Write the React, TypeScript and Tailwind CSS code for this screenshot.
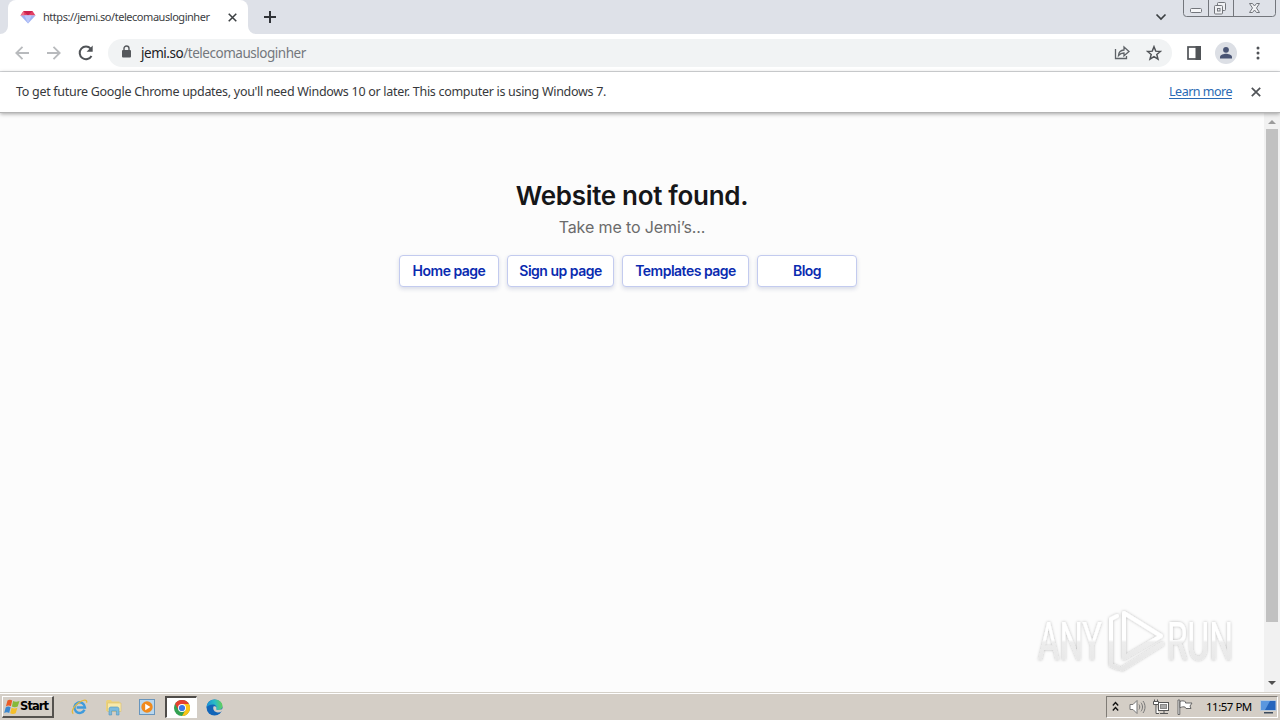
import type { ReactNode } from "react";

const TAHOMA = "font-['Noto_Sans','DejaVu_Sans',sans-serif]";

function Gem() {
  return (
    <svg className="shrink-0" width="16" height="14" viewBox="0 0 16 14">
      <path d="M3.5 1h9L15.5 5.500H.5z" fill="#e23f63" />
      <path d="M3.5 1 8 5.500l4.500-4.500z" fill="#c92350" />
      <path d="M.5 5.500h4L3.500 1z" fill="#f0708a" />
      <path d="M.5 5.500h15L8 13.500z" fill="#9fb2f3" />
      <path d="M4.500 5.500h7l-3.500 8z" fill="#bcc8fa" />
    </svg>
  );
}

function Cross({ size, color, width = 1.7 }: { size: number; color: string; width?: number }) {
  return (
    <svg width={size} height={size} viewBox="0 0 10 10" stroke={color} strokeWidth={width} fill="none">
      <path d="M.8.8l8.400 8.400M9.200.8L.8 9.200" />
    </svg>
  );
}

function TabStrip() {
  return (
    <div className="flex h-[34px] items-stretch bg-[#dee1e8]">
      <svg width="8" height="34" viewBox="0 0 8 34">
        <path d="M0 34a8 8 0 0 0 8-8v8z" fill="#fff" />
      </svg>
      <div className="flex w-[240px] items-center rounded-t-lg bg-white pl-3 pr-[11px]">
        <Gem />
        <span className={`ml-[7px] whitespace-nowrap text-[11px] tracking-[-0.46px] text-[#3c4043] ${TAHOMA}`}>
          https://jemi.so/telecomausloginher
        </span>
        <span className="ml-auto">
          <Cross size={9} color="#3c4043" />
        </span>
      </div>
      <svg width="8" height="34" viewBox="0 0 8 34">
        <path d="M8 34a8 8 0 0 1-8-8v8z" fill="#fff" />
      </svg>
      <svg className="ml-2 mt-[11px]" width="12" height="12" viewBox="0 0 12 12" stroke="#303338" strokeWidth="2">
        <path d="M6 0v12M0 6h12" />
      </svg>
      <svg className="ml-auto mt-[13px]" width="12" height="8" viewBox="0 0 12 8" fill="none" stroke="#3c4043" strokeWidth="1.700">
        <path d="M1.500 1.500 6 6l4.500-4.500" />
      </svg>
      <svg className="ml-4 mr-1" width="93" height="17" viewBox="0 0 93 17" fill="none" stroke="#73767c">
        <path d="M.5 0v13.500a3 3 0 0 0 3 3h86a3 3 0 0 0 3-3V0M25.500 0v16M50.500 0v16" />
        <rect x="7.500" y="8.500" width="11" height="4" rx="1" fill="#f5f6f8" />
        <g fill="#f0f1f4">
          <rect x="34.500" y="2.500" width="8" height="8" rx="1" />
          <rect x="31.500" y="5.500" width="8" height="8.500" rx="1" />
          <rect x="34.500" y="8.500" width="2.500" height="2.500" />
        </g>
        <path d="M66.500 3.500h3l2 2.500 2-2.500h3l-3 4.500 3 4.500h-3l-2-2.500-2 2.500h-3l3-4.500z" fill="#f0f1f4" />
      </svg>
    </div>
  );
}

function Arrow({ flip = false }: { flip?: boolean }) {
  return (
    <svg className={flip ? "rotate-180" : ""} width="14" height="14" viewBox="0 0 14 14" fill="none" stroke="#b8babd" strokeWidth="1.800">
      <path d="M14 7H1.500M7.500.8 1.300 7l6.200 6.200" />
    </svg>
  );
}

function Toolbar() {
  return (
    <div className="flex h-[38px] items-center border-b border-[#d8dadd] bg-white pl-[15px] pr-5">
      <Arrow />
      <span className="ml-[18px]">
        <Arrow flip />
      </span>
      <svg className="ml-[17px]" width="16" height="16" viewBox="0 0 16 16">
        <path d="M13.500 11A6.300 6.300 0 1 1 12.700 3.700" fill="none" stroke="#505357" strokeWidth="2" />
        <path d="M14.700.6v6.100H8.600z" fill="#505357" />
      </svg>
      <div className="ml-[14px] flex h-7 flex-1 items-center rounded-full bg-[#f1f3f4] pl-[14px] pr-[10px]">
        <svg className="mb-[2px]" width="9" height="13" viewBox="0 0 9 13">
          <rect x="0" y="5" width="9" height="7.500" rx="1" fill="#55585c" />
          <path d="M2 5.500V3.500a2.500 2.500 0 0 1 5 0v2" fill="none" stroke="#55585c" strokeWidth="1.400" />
        </svg>
        <span className={`ml-[10px] whitespace-nowrap pt-0.5 text-[13.5px] tracking-[-0.47px] text-[#74787d] ${TAHOMA}`}>
          <span className="text-[#202124]">jemi.so</span>/telecomausloginher
        </span>
        <svg className="ml-auto" width="16" height="15" viewBox="0 0 16 15" fill="none" stroke="#5f6368" strokeWidth="1.300">
          <path d="M1.500 4v9.500h11V11" />
          <path d="M4.500 10.500c.3-3.500 2.200-5.300 5.500-5.500V2l5 4.500-5 4.300V8c-2.500 0-4 .7-5.500 2.500z" />
        </svg>
        <svg className="ml-4" width="16" height="16" viewBox="0 0 24 24" fill="none" stroke="#505357" strokeWidth="2.200">
          <path d="M12 2.500l2.600 6.700 7 .5-5.400 4.500 1.800 7-6-3.900-6 3.900 1.800-7-5.400-4.500 7-.5z" />
        </svg>
      </div>
      <svg className="ml-[15px]" width="14" height="14" viewBox="0 0 14 14">
        <rect x="1" y="1" width="12" height="12" fill="none" stroke="#505357" strokeWidth="1.700" />
        <rect x="8.500" y="0" width="5.500" height="14" fill="#505357" />
      </svg>
      <svg className="ml-[14px]" width="22" height="22" viewBox="0 0 22 22">
        <circle cx="11" cy="11" r="11" fill="#dcdfe5" />
        <circle cx="11" cy="7.800" r="2.900" fill="#495474" />
        <path d="M5 16.500v-1.500c0-2.300 4-3.200 6-3.200s6 .9 6 3.200v1.500z" fill="#495474" />
      </svg>
      <svg className="ml-[19px]" width="4" height="14" viewBox="0 0 4 14" fill="#505357">
        <circle cx="2" cy="2" r="1.500" />
        <circle cx="2" cy="7" r="1.500" />
        <circle cx="2" cy="12" r="1.500" />
      </svg>
    </div>
  );
}

function InfoBar() {
  return (
    <div className={`relative z-10 flex h-[41px] items-center border-b border-[#b4b4b4] bg-white pl-4 pr-[19px] text-[12.5px] shadow-[0_1px_4px_rgba(0,0,0,0.35)] ${TAHOMA}`}>
      <span className="whitespace-nowrap tracking-[-0.293px] text-[#37393c]">
        To get future Google Chrome updates, you'll need Windows 10 or later. This computer is using Windows 7.
      </span>
      <a className="ml-auto whitespace-nowrap tracking-[-0.5px] text-[#2a6ab4] underline underline-offset-2">Learn more</a>
      <span className="ml-[19px]">
        <Cross size={10} color="#505357" />
      </span>
    </div>
  );
}

function PageButton({ className, children }: { className: string; children: ReactNode }) {
  return (
    <button className={`mr-2 h-8 whitespace-nowrap rounded border border-[#c3cbef] bg-white pb-0.5 text-[14px] font-semibold tracking-[-0.5px] text-[#0a2bb0] shadow-[0_2px_4px_rgba(30,50,120,0.16)] ${className}`}>
      {children}
    </button>
  );
}

function Watermark() {
  return (
    <svg className="absolute bottom-[14px] right-[14px]" width="216" height="76" viewBox="0 0 216 76">
      <defs>
        <linearGradient id="fade" gradientUnits="userSpaceOnUse" x1="0" y1="10" x2="0" y2="68">
          <stop offset="0.48" stopColor="#ffffff" />
          <stop offset="0.52" stopColor="#ededed" />
          <stop offset="1" stopColor="#e6e6e6" />
        </linearGradient>
        <filter id="soft" x="-10%" y="-10%" width="120%" height="120%">
          <feDropShadow dx="0" dy="0" stdDeviation="1.8" floodColor="#000" floodOpacity="0.28" />
        </filter>
      </defs>
      <g filter="url(#soft)" fill="url(#fade)" fontFamily="Roboto, sans-serif" fontSize="53">
        <text x="4" y="57.500" textLength="64" lengthAdjust="spacingAndGlyphs">ANY</text>
        <text x="133" y="57.500" textLength="66" lengthAdjust="spacingAndGlyphs">RUN</text>
      </g>
      <g filter="url(#soft)" fill="none" stroke="url(#fade)" strokeWidth="4" strokeLinejoin="round" strokeLinecap="round">
        <path d="M90 11 127 34 90 56z" />
        <path d="M83 14 77 17v46l7 3M88 67 128 42" />
      </g>
    </svg>
  );
}

function Viewport() {
  return (
    <div className="flex min-h-0 flex-1 bg-[#fcfcfc]">
      <main className="relative flex flex-1 flex-col items-center pt-[67px] font-['Inter',sans-serif]">
        <h1 className="text-[26px] font-semibold leading-8 tracking-[-0.3px] text-[#161618]">Website not found.</h1>
        <p className="mt-[3px] text-[16px] leading-6 tracking-[-0.12px] text-[#6b6b6b]">Take me to Jemi’s...</p>
        <div className="mt-4 flex">
          <PageButton className="w-[100px]">Home page</PageButton>
          <PageButton className="w-[107px]">Sign up page</PageButton>
          <PageButton className="w-[127px]">Templates page</PageButton>
          <PageButton className="w-[100px]">Blog</PageButton>
        </div>
        <Watermark />
      </main>
      <div className="flex w-4 flex-col items-center bg-[#f1f1f1] py-[6px]">
        <svg width="8" height="5" viewBox="0 0 8 5"><path d="M0 5 4 1l4 4z" fill="#9b9b9b" /></svg>
        <div className="mt-[5px] h-[493px] w-3 bg-[#c1c1c1]" />
        <svg className="mt-auto" width="8" height="5" viewBox="0 0 8 5"><path d="M0 0l4 4 4-4z" fill="#505050" /></svg>
      </div>
    </div>
  );
}

function WindowsFlag() {
  return (
    <svg className="shrink-0" width="16" height="16" viewBox="0 0 16 16">
      <path d="M3.500 1.500C5 .3 6.800.5 8.200 1.500L6.900 7.300C5.500 6.400 3.700 6.300 1.900 7.400z" fill="#ea5b25" />
      <path d="M9.100 1.900c1.700 1 3.900 1.100 6.400 0l-1.800 5.700c-1.900 1.100-4.200.9-5.800 0z" fill="#86b93a" />
      <path d="M1.700 8.400c1.500-1.100 3.500-1 4.900-.1l-1.400 5.600C3.800 13 1.800 12.900.2 14z" fill="#3b87cf" />
      <path d="M7.600 8.700c1.600 1 3.900 1.100 5.800.1l-1.700 5.500c-1.900 1-4 .9-5.500-.1z" fill="#f5bf2b" />
    </svg>
  );
}

function InternetExplorer() {
  return (
    <svg width="17" height="18" viewBox="0 0 18 18" fill="none">
      <path d="M14.300 12A5.600 5.600 0 1 1 14.800 9.500H6" stroke="#3f9bdc" strokeWidth="2.600" />
      <path d="M2.500 16C-.5 14.500 3 7.800 8.500 4.200 13 1.200 17.500.6 16.500 4.500" stroke="#e5b93c" strokeWidth="1.400" />
    </svg>
  );
}

function Folder() {
  return (
    <svg width="17" height="17" viewBox="0 0 17 17">
      <path d="M1 2.500 2 1h4l1 1.500h7.500V12H1z" fill="#ecd27b" />
      <path d="M2.500 4H16v8.500H2.500z" fill="#f7e9ab" stroke="#dcc06a" strokeWidth=".6" />
      <path d="M4 16V9.800C4 8.600 5 8 6 8h6c1.200 0 2 .8 2 2v6h-2.600v-4H6.600v4z" fill="#7cbbdd" stroke="#4d93bd" strokeWidth=".6" />
    </svg>
  );
}

function MediaPlayer() {
  return (
    <svg width="16" height="16" viewBox="0 0 16 16">
      <rect x=".5" y=".5" width="15" height="15" fill="#b9d7ee" stroke="#6895bd" />
      <circle cx="8" cy="8" r="5.700" fill="#f08a1d" />
      <path d="M6.200 4.700 11.400 8l-5.200 3.300z" fill="#fff" />
    </svg>
  );
}

function ChromeLogo() {
  return (
    <svg width="16" height="16" viewBox="0 0 16 16">
      <circle cx="8" cy="8" r="8" fill="#33a152" />
      <path d="M1.070 4A8 8 0 0 1 14.930 4H8L4.540 10z" fill="#e5402f" />
      <path d="M14.930 4A8 8 0 0 1 8 16l3.460-6L8 4z" fill="#fbc316" />
      <circle cx="8" cy="8" r="4" fill="#fff" />
      <circle cx="8" cy="8" r="3.100" fill="#3b78e7" />
    </svg>
  );
}

function EdgeLogo() {
  return (
    <svg width="17" height="17" viewBox="0 0 17 17">
      <defs>
        <linearGradient id="edgeTop" x1="0" y1="0.500" x2="1" y2="0.400">
          <stop offset="0" stopColor="#1b8fd6" />
          <stop offset="0.550" stopColor="#2bbdc4" />
          <stop offset="1" stopColor="#66cf55" />
        </linearGradient>
      </defs>
      <circle cx="8.500" cy="8.500" r="8" fill="#1265b8" />
      <path d="M.5 8.500C.8 3.600 4.300.5 8.700.5c4.800 0 7.800 3.200 7.800 6.500 0 2.500-1.800 4-4.200 4-1.600 0-2.700-.5-2.200-1.300C11.300 7.500 9.300 5.500 7 5.500 3.800 5.500 1 7 .5 8.500z" fill="url(#edgeTop)" />
      <path d="M7.700 7.300c-1.500 2.700.5 6.100 4.300 6.100 1.400 0 2.600-.4 3.600-1 .5-.2.8.1.4.7H17v-3l-4.500.9c-1.600 0-2.700-.5-2.200-1.300.7-1.300-.6-3-2.600-2.400z" fill="#d4cec6" />
    </svg>
  );
}

function TrayIcons() {
  return (
    <>
      <svg className="mb-0.5" width="7" height="11" viewBox="0 0 7 11" fill="none" stroke="#111" strokeWidth="1.300">
        <path d="M.8 4.500 3.500 1.500l2.700 3M.8 9.500l2.700-3 2.700 3" />
      </svg>
      <svg className="ml-[10px]" width="17" height="16" viewBox="0 0 17 16" fill="none" stroke="#777">
        <path d="M1 5.500h3l4-4v13l-4-4H1z" fill="#fff" />
        <path d="M10 5.500c1 1.500 1 3.500 0 5M12 3.700c2 2.700 2 6 0 8.600M14 2c2.700 3.700 2.700 8.300 0 12" />
      </svg>
      <svg className="ml-[7px]" width="17" height="16" viewBox="0 0 17 16" fill="none" stroke="#555">
        <rect x="5.500" y="3.500" width="10" height="8" fill="#fff" />
        <rect x="7.500" y="5.500" width="6" height="4" fill="#a9a9a9" stroke="#888" />
        <path d="M7 14.500h8M11 12v2" />
        <path d="M1.500 3V.5M4.500 3V.5M.5 2.500h5v3h-5zM3 6v8.500h3" fill="#fff" />
      </svg>
      <svg className="ml-[7px]" width="17" height="16" viewBox="0 0 17 16" fill="#fff" stroke="#666">
        <path d="M1 1h1.800v14.500H1z" />
        <path d="M3 2.500c2-1 4-.8 5.500.3v1.200h6.500l-2 3 1 2.500h-5l-.8-1.300C6.500 7.500 5 7.800 3 8.800z" />
      </svg>
    </>
  );
}

function Taskbar() {
  return (
    <div className="flex h-7 items-stretch border-t border-[#d4d0c8] bg-[#d4cec6] shadow-[inset_0_1px_0_#fff]">
      <button className="ml-0.5 mt-[3px] flex h-[22px] w-[52px] items-center border-b-2 border-l border-r-2 border-t border-b-[#55524e] border-l-white border-r-[#55524e] border-t-white pl-px font-['DejaVu_Sans',sans-serif] text-[11.5px] font-bold tracking-[-0.9px] text-black">
        <WindowsFlag />
        <span>Start</span>
      </button>
      <div className="ml-[17px] flex items-center gap-[17px] pt-px">
        <InternetExplorer />
        <Folder />
        <MediaPlayer />
      </div>
      <div className="ml-[10px] mt-[3px] flex h-[22px] w-8 items-center justify-center border-b border-l-2 border-r border-t-2 border-b-white border-l-[#4f4c49] border-r-white border-t-[#4f4c49] bg-white">
        <ChromeLogo />
      </div>
      <div className="ml-[9px] flex items-center pt-px">
        <EdgeLogo />
      </div>
      <div className="ml-auto mr-0.5 mt-[3px] flex h-[22px] w-[172px] items-center border border-b-white border-l-[#807c76] border-r-white border-t-[#807c76] pl-[5px]">
        <TrayIcons />
        <span className={`ml-[12px] whitespace-nowrap text-[11.5px] tracking-[-0.5px] text-black ${TAHOMA}`}>11:57 PM</span>
        <svg className="ml-auto shrink-0" width="17" height="14" viewBox="0 0 17 14">
          <rect x=".5" y=".5" width="15.500" height="10" fill="#2465bd" stroke="#b7c9dc" />
          <path d="M1 1h9L5 10H1z" fill="#5a97df" />
          <path d="M4 12h9v1.500H4z" fill="#3b4a5c" />
        </svg>
      </div>
    </div>
  );
}

export default function App() {
  return (
    <div className="flex h-[720px] w-[1280px] flex-col overflow-hidden">
      <TabStrip />
      <Toolbar />
      <InfoBar />
      <Viewport />
      <Taskbar />
    </div>
  );
}
